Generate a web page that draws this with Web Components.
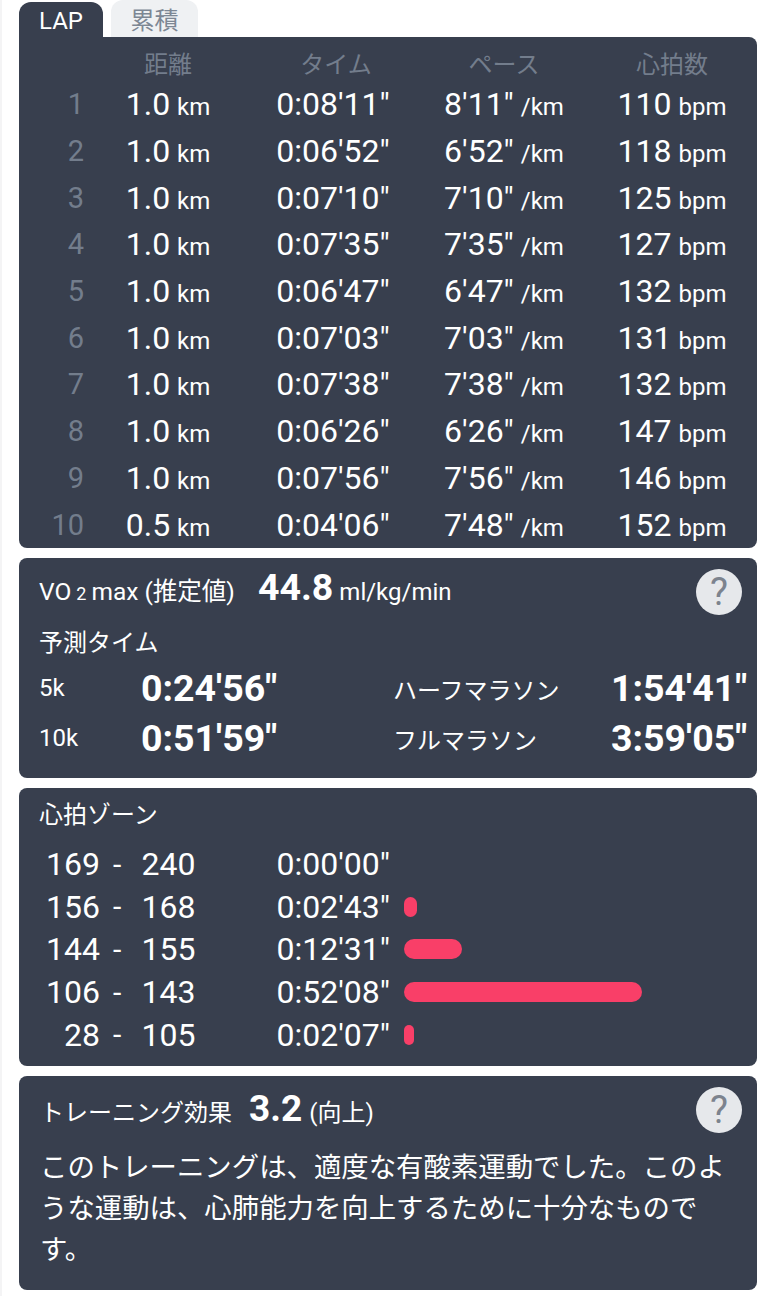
<!DOCTYPE html>
<html lang="ja">
<head>
<meta charset="utf-8">
<title>LAP</title>
<style>
  html, body { margin: 0; background: #fff; }
  body { font-family: Roboto, "Noto Sans CJK JP", sans-serif; color: #fff; }
</style>
</head>
<body>
<run-page>
  <tab-bar></tab-bar>
  <lap-table></lap-table>
  <vo2-card></vo2-card>
  <zone-card></zone-card>
  <effect-card></effect-card>
</run-page>

<script>
const FONT = 'Roboto, "Noto Sans CJK JP", sans-serif'
const PANEL = '#383f4e'

class RunPage extends HTMLElement {
  constructor() {
    super()
    this.attachShadow({ mode: 'open' }).innerHTML = `<style>
      :host { display: flex; flex-direction: column; width: 776px; height: 1296px; box-sizing: border-box; padding: 0 19px 0 17px; border-left: 2px solid #f4f4f5; overflow: hidden; background: #fff; font-family: ${FONT}; }
    </style><slot></slot>`
  }
}

class TabBar extends HTMLElement {
  constructor() {
    super()
    this.attachShadow({ mode: 'open' }).innerHTML = `<style>
      :host { display: flex; align-items: flex-end; gap: 8px; height: 37px; }
      div { display: flex; align-items: center; justify-content: center; box-sizing: border-box; font-size: 24px; border-radius: 12px 12px 0 0; }
      .on { width: 84px; height: 35px; padding-top: 3px; background: ${PANEL}; color: #fff; }
      .off { width: 87px; height: 37px; background: #eff1f3; color: #7d8794; }
    </style><div class="on">LAP</div><div class="off">累積</div>`
  }
}

class PanelCard extends HTMLElement {
  constructor() {
    super()
    this.attachShadow({ mode: 'open' }).innerHTML = `<style>
      :host { display: block; box-sizing: border-box; background: ${PANEL}; border-radius: 8px; margin-top: 10px; position: relative; }
    </style><slot></slot>`
  }
}

class HelpButton extends HTMLElement {
  constructor() {
    super()
    this.attachShadow({ mode: 'open' }).innerHTML = `<style>
      :host { position: absolute; right: 15px; top: 11px; width: 46px; height: 46px; border-radius: 50%; background: #e6e8eb; color: #7c838e; display: flex; align-items: center; justify-content: center; font-size: 38px; font-weight: 400; }
    </style>?`
  }
}

const laps = [
  ['1', '1.0', "0:08'11\"", "8'11\"", '110'],
  ['2', '1.0', "0:06'52\"", "6'52\"", '118'],
  ['3', '1.0', "0:07'10\"", "7'10\"", '125'],
  ['4', '1.0', "0:07'35\"", "7'35\"", '127'],
  ['5', '1.0', "0:06'47\"", "6'47\"", '132'],
  ['6', '1.0', "0:07'03\"", "7'03\"", '131'],
  ['7', '1.0', "0:07'38\"", "7'38\"", '132'],
  ['8', '1.0', "0:06'26\"", "6'26\"", '147'],
  ['9', '1.0', "0:07'56\"", "7'56\"", '146'],
  ['10', '0.5', "0:04'06\"", "7'48\"", '152'],
]

class LapTable extends HTMLElement {
  constructor() {
    super()
    const rows = laps.map(l => `
      <div class="no">${l[0]}</div>
      <div>${l[1]} <small>km</small></div>
      <div class="time">${l[2]}</div>
      <div>${l[3]} <small>/km</small></div>
      <div>${l[4]} <small>bpm</small></div>`).join('')
    this.attachShadow({ mode: 'open' }).innerHTML = `<style>
      :host { display: block; background: ${PANEL}; border-radius: 0 8px 8px 8px; height: 511px; box-sizing: border-box; padding-top: 7px; }
      .grid { display: grid; grid-template-columns: 65px repeat(4, 168px); grid-template-rows: 37px repeat(10, 46.7px); align-items: center; text-align: center; font-size: 32px; word-spacing: -1px; white-space: nowrap; }
      .head { color: #737d8c; font-size: 24px; }
      .no { color: #737d8c; font-size: 29px; text-align: right; }
      .time { padding-right: 6px; }
      small { font-size: 24px; }
    </style><div class="grid">
      <div></div><div class="head">距離</div><div class="head">タイム</div><div class="head">ペース</div><div class="head">心拍数</div>
      ${rows}
    </div>`
  }
}

class Vo2Card extends HTMLElement {
  constructor() {
    super()
    this.attachShadow({ mode: 'open' }).innerHTML = `<style>
      :host { display: block; }
      panel-card { height: 220px; padding: 0 10px 0 20px; }
      .top { display: flex; align-items: baseline; height: 62px; font-size: 24px; line-height: 58px; }
      .label { font-size: 24.5px; }
      .top .sub { font-size: 18px; margin: 0 5px; }
      b { font-size: 37.5px; font-weight: 700; margin: 0 6px 0 23px; }
      h3 { margin: 0; font-size: 24px; font-weight: 400; line-height: 44px; padding-top: 1px; }
      .grid { display: grid; grid-template-columns: 102px 252px 218px auto; grid-template-rows: 50px 50px; align-items: center; font-size: 24px; margin-top: -2px; }
      .big { font-size: 37.5px; font-weight: 700; }
      .end { justify-self: end; }
    </style><panel-card>
      <div class="top"><span class="label">VO<span class="sub">2</span>max (推定値)</span><b>44.8</b><span>ml/kg/min</span></div>
      <help-button></help-button>
      <h3>予測タイム</h3>
      <div class="grid">
        <div>5k</div><div class="big">0:24'56"</div><div>ハーフマラソン</div><div class="big end">1:54'41"</div>
        <div>10k</div><div class="big">0:51'59"</div><div>フルマラソン</div><div class="big end">3:59'05"</div>
      </div>
    </panel-card>`
  }
}

class ZoneRow extends HTMLElement {
  constructor() {
    super()
    const bar = this.getAttribute('bar')
    this.attachShadow({ mode: 'open' }).innerHTML = `<style>
      :host { display: grid; grid-template-columns: 60px 41.5px 53px 82px 127.5px auto; height: 42.6px; align-items: center; font-size: 32px; white-space: nowrap; }
      .from { text-align: right; }
      .dash { padding-left: 13px; font-size: 30px; }
      i { display: block; height: 20px; border-radius: 10px; background: #f93f68; }
    </style>
    <div class="from">${this.getAttribute('from')}</div><div class="dash">-</div><div>${this.getAttribute('to')}</div><div></div>
    <div>${this.getAttribute('time')}</div>
    ${bar ? `<i style="width:${bar}px"></i>` : '<span></span>'}`
  }
}

class ZoneCard extends HTMLElement {
  constructor() {
    super()
    this.attachShadow({ mode: 'open' }).innerHTML = `<style>
      :host { display: block; }
      panel-card { height: 278px; padding: 9px 0 0 21px; }
      h3 { margin: 0 0 10px -1px; font-size: 24px; font-weight: 400; line-height: 36px; }
    </style><panel-card>
      <h3>心拍ゾーン</h3>
      <zone-row from="169" to="240" time="0:00'00&quot;"></zone-row>
      <zone-row from="156" to="168" time="0:02'43&quot;" bar="13"></zone-row>
      <zone-row from="144" to="155" time="0:12'31&quot;" bar="58"></zone-row>
      <zone-row from="106" to="143" time="0:52'08&quot;" bar="238"></zone-row>
      <zone-row from="28" to="105" time="0:02'07&quot;" bar="10"></zone-row>
    </panel-card>`
  }
}

class EffectCard extends HTMLElement {
  constructor() {
    super()
    this.attachShadow({ mode: 'open' }).innerHTML = `<style>
      :host { display: block; }
      panel-card { height: 214px; padding: 0 21px; }
      .top { display: flex; align-items: baseline; height: 72px; line-height: 65px; font-size: 24px; }
      b { font-size: 37px; font-weight: 700; margin: 0 7px 0 17px; }
      p { margin: 0; font-size: 27.4px; line-height: 41px; width: 692px; }
    </style><panel-card>
      <div class="top"><span>トレーニング効果</span><b>3.2</b><span>(向上)</span></div>
      <help-button></help-button>
      <p>このトレーニングは、適度な有酸素運動でした。このような運動は、心肺能力を向上するために十分なものです。</p>
    </panel-card>`
  }
}

customElements.define('run-page', RunPage)
customElements.define('tab-bar', TabBar)
customElements.define('panel-card', PanelCard)
customElements.define('help-button', HelpButton)
customElements.define('lap-table', LapTable)
customElements.define('vo2-card', Vo2Card)
customElements.define('zone-row', ZoneRow)
customElements.define('zone-card', ZoneCard)
customElements.define('effect-card', EffectCard)
</script>
</body>
</html>
